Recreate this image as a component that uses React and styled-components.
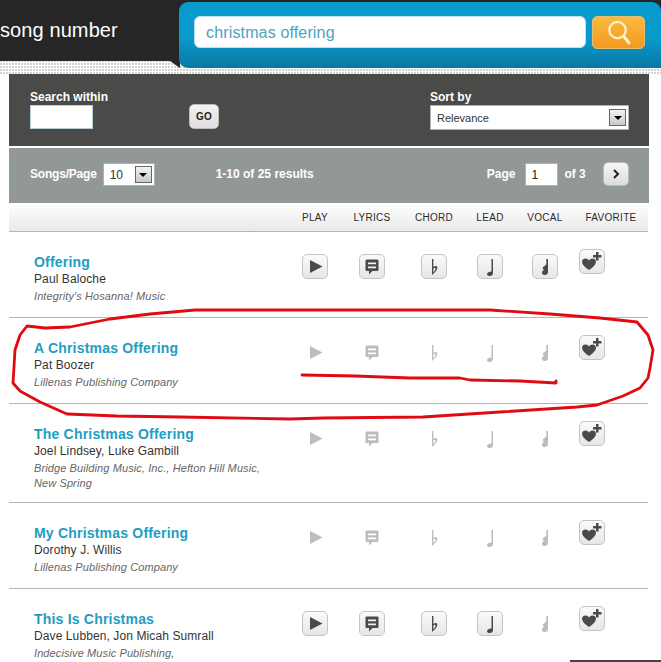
import React from 'react';
import styled, { createGlobalStyle } from 'styled-components';

const Global = createGlobalStyle`
  html, body { margin: 0; padding: 0; background: #fff; }
  body { font-family: "Liberation Sans", Arial, sans-serif; }
`;

const Page = styled.div`
  position: relative;
  width: 661px;
  height: 662px;
  overflow: hidden;
  background: #fff;
`;

const Masthead = styled.header`
  position: relative;
  display: flex;
  height: 74px;
  background:
    linear-gradient(#262626 61px, transparent 61px),
    radial-gradient(circle at 1px 1px, #cfd3d3 0.8px, transparent 1px) 0 0 / 3px 3px;
  &::after {
    content: "";
    position: absolute;
    left: 170px;
    top: 61px;
    width: 10px;
    height: 7px;
    background: #262626;
    clip-path: polygon(0 0, 100% 0, 100% 100%);
  }
`;

const Brand = styled.div`
  width: 179px;
  height: 61px;
  display: flex;
  align-items: center;
  padding-bottom: 1px;
  box-sizing: border-box;
  color: #fff;
  font-size: 20px;
  letter-spacing: 0.1px;
  white-space: nowrap;
`;

const SearchPanel = styled.div`
  position: relative;
  z-index: 1;
  flex: 1;
  height: 66px;
  margin-top: 2px;
  box-sizing: border-box;
  padding: 14px 16px 0 15px;
  display: flex;
  gap: 6px;
  align-items: flex-start;
  border-radius: 9px 9px 0 9px;
  background: linear-gradient(#079bcd, #0a9acb 55%, #0a78a3);
`;

const SearchField = styled.div`
  flex: 1;
  height: 32px;
  box-sizing: border-box;
  padding-left: 11px;
  border-radius: 6px;
  background: #fff;
  border: 1px solid #bfe0ee;
  color: #4aa3c0;
  font-size: 16px;
  letter-spacing: 0.15px;
  line-height: 32px;
`;

const SearchButton = styled.button`
  width: 53px;
  height: 33px;
  padding: 0;
  display: flex;
  align-items: center;
  justify-content: center;
  border: 1px solid #e4c170;
  border-radius: 5px;
  background: linear-gradient(#fbb93f, #f39a1e);
`;

const FilterPanel = styled.section`
  height: 72px;
  margin: 0 12px 0 9px;
  box-sizing: border-box;
  padding: 16px 20px 0 21px;
  display: flex;
  align-items: flex-start;
  background: #4a4a48;
`;

const FieldGroup = styled.div`
  display: flex;
  flex-direction: column;
  width: ${p => p.$width}px;
  margin-left: ${p => p.$left || 0}px;
`;

const FieldLabel = styled.label`
  color: #fff;
  font-size: 12px;
  font-weight: bold;
  line-height: 15px;
`;

const WithinInput = styled.div`
  width: 63px;
  height: 24px;
  box-sizing: border-box;
  background: #fff;
  border: 1px solid #b9cbd3;
`;

const GoButton = styled.button`
  width: 30px;
  height: 25px;
  margin: 14px 0 0 0;
  padding: 0;
  border: 1px solid #bbb;
  border-radius: 5px;
  background: linear-gradient(#f2f2f2, #dedede);
  color: #222;
  font: bold 10px "Liberation Sans", Arial, sans-serif;
  letter-spacing: 0.3px;
`;

const SelectBox = styled.div`
  width: ${p => p.$width}px;
  height: ${p => p.$height}px;
  box-sizing: border-box;
  display: flex;
  align-items: center;
  justify-content: space-between;
  padding: 0 2px 0 ${p => p.$pad}px;
  background: #fff;
  border: 1px solid #a9b4b8;
  color: #333;
  font-size: ${p => p.$size}px;
  font-weight: normal;
`;

const SelectArrow = styled.span`
  width: 17px;
  height: 17px;
  box-sizing: border-box;
  display: flex;
  align-items: center;
  justify-content: center;
  border: 1px solid #666;
  background: linear-gradient(#f4f4f4, #c8c8c8);
  &::before {
    content: "";
    border-left: 4px solid transparent;
    border-right: 4px solid transparent;
    border-top: 4px solid #000;
  }
`;

const PagerBar = styled.section`
  height: 55px;
  margin: 2px 12px 0 9px;
  box-sizing: border-box;
  padding: 15px 20px 0 21px;
  display: flex;
  align-items: flex-start;
  background: #929896;
  color: #fff;
  font-size: 12px;
  font-weight: bold;
`;

const PagerText = styled.span`
  line-height: 22px;
  margin-left: ${p => p.$left || 0}px;
  margin-right: ${p => p.$right || 0}px;
  letter-spacing: ${p => p.$tight ? '-0.2px' : '0'};
  white-space: nowrap;
`;

const PageInput = styled.div`
  width: 33px;
  height: 23px;
  box-sizing: border-box;
  margin-left: 10px;
  padding-left: 5px;
  background: #fff;
  border: 1px solid #a9b4b8;
  color: #222;
  font-size: 12px;
  font-weight: normal;
  line-height: 22px;
`;

const NextButton = styled.button`
  width: 26px;
  height: 24px;
  margin: -1px 0 0 auto;
  padding: 0;
  display: flex;
  align-items: center;
  justify-content: center;
  border: 1px solid #bbb;
  border-radius: 5px;
  background: linear-gradient(#f6f6f6, #dcdcdc);
`;

const ColumnBar = styled.div`
  height: 29px;
  margin: 0 13px 0 9px;
  box-sizing: border-box;
  padding-left: 278px;
  display: grid;
  grid-template-columns: 56px 58px 66px 46px 64px 68px;
  align-items: center;
  background: linear-gradient(#fff, #e9e9e9);
  border-bottom: 1px solid #b5b5b5;
`;

const ColumnLabel = styled.span`
  text-align: center;
  font-size: 10px;
  letter-spacing: 0.3px;
  color: #2a2a2a;
  white-space: nowrap;
`;

const SongRow = styled.article`
  margin: 0 13px 0 9px;
  display: grid;
  grid-template-columns: 293px 57px 62px 56px 55px 47px 26px;
  align-items: start;
  min-height: 85px;
  border-bottom: 1px solid #b5b5b5;
`;

const SongInfo = styled.div`
  padding: 21px 40px 11px 25px;
`;

const SongTitle = styled.a`
  display: block;
  color: #239cc2;
  font-size: 14px;
  font-weight: bold;
  line-height: 19px;
  letter-spacing: 0.2px;
`;

const Artist = styled.div`
  color: #333;
  font-size: 12px;
  letter-spacing: 0.1px;
  line-height: 15px;
`;

const Publisher = styled.div`
  margin-top: 2px;
  color: #666;
  font-size: 11px;
  font-style: italic;
  letter-spacing: 0.1px;
  line-height: 15px;
`;

const IconCell = styled.div`
  width: 26px;
  height: 25px;
  margin-top: ${p => p.$fav ? 17 : 22}px;
  box-sizing: border-box;
  color: ${p => p.$off ? '#bdbdbd' : '#4a4a4a'};
  ${p => p.$off ? '' : `
    border: 1px solid #c4c4c4;
    border-radius: 5px;
    background: linear-gradient(#fafafa, #e6e6e6);
  `}
  & svg { display: block; margin: ${p => p.$off ? 0 : -1}px; }
`;

const Scribble = styled.svg`
  position: absolute;
  left: 0;
  top: 0;
  pointer-events: none;
`;

const CropEdge = styled.div`
  position: absolute;
  right: 0;
  bottom: 0;
  width: 91px;
  height: 2px;
  background: #444;
`;

const Glyph = ({ children }) => (
  <svg width="26" height="25" viewBox="0 0 26 25" fill="currentColor">{children}</svg>
);

const Play = () => <Glyph><path d="M8 6 L20.5 12.5 L8 19 Z" /></Glyph>;
const Lyrics = () => (
  <Glyph>
    <path fillRule="evenodd" d="M7.5 5.5 H18.5 Q19.5 5.5 19.5 6.5 V16 Q19.5 17 18.5 17 H13.5 L10 20.5 V17 H7.5 Q6.5 17 6.5 16 V6.5 Q6.5 5.5 7.5 5.5 Z M9 8.5 V10.2 H17 V8.5 Z M9 12.5 V14.2 H17 V12.5 Z" />
  </Glyph>
);
const Flat = () => (
  <Glyph>
    <path fillRule="evenodd" d="M11 5 H12.4 V13 Q14 11.5 15.5 12 Q17 13 16 15.5 Q14.5 18.5 11 21 Z M12.4 14.5 V18.5 Q14.8 16 14.6 14.3 Q13.8 13.2 12.4 14.5 Z" />
  </Glyph>
);
const Lead = () => (
  <Glyph>
    <path d="M14.5 5 H16 V19 Q16 21.5 13 22 Q10 22 10 20 Q10.5 17.5 14.5 17.5 Z" />
  </Glyph>
);
const Vocal = () => (
  <Glyph>
    <path d="M14.3 5 H16 V18 Q16 21 12.5 21 Q9.5 20.5 10 18 Q10.5 16.5 12 16 Q10 14.5 11 13 Q12.5 12 14.3 10.5 Z" />
  </Glyph>
);
const Favorite = () => (
  <Glyph>
    <path d="M10 21 Q3 16.5 3 12.5 Q3.5 9.5 6.5 9.5 Q9 9.5 10 11.5 Q11 9.5 13.5 9.5 Q16.5 9.5 17 12.5 Q17 16.5 10 21 Z" />
    <path d="M17 3 H19.5 V6 H22.5 V8.5 H19.5 V11.5 H17 V8.5 H14 V6 H17 Z" />
  </Glyph>
);

const icons = [Play, Lyrics, Flat, Lead, Vocal];
const columns = ['PLAY', 'LYRICS', 'CHORD', 'LEAD', 'VOCAL', 'FAVORITE'];

const songs = [
  { title: 'Offering', artist: 'Paul Baloche', publisher: "Integrity's Hosanna! Music", off: [] },
  { title: 'A Christmas Offering', artist: 'Pat Boozer', publisher: 'Lillenas Publishing Company', off: [0, 1, 2, 3, 4] },
  { title: 'The Christmas Offering', artist: 'Joel Lindsey, Luke Gambill', publisher: 'Bridge Building Music, Inc., Hefton Hill Music, New Spring', off: [0, 1, 2, 3, 4] },
  { title: 'My Christmas Offering', artist: 'Dorothy J. Willis', publisher: 'Lillenas Publishing Company', off: [0, 1, 2, 3, 4] },
  { title: 'This Is Christmas', artist: 'Dave Lubben, Jon Micah Sumrall', publisher: 'Indecisive Music Publishing,', off: [4] },
];

export default function App() {
  return (
    <Page>
      <Global />
      <Masthead>
        <Brand>song number</Brand>
        <SearchPanel>
          <SearchField>christmas offering</SearchField>
          <SearchButton aria-label="Search">
            <svg width="30" height="29" viewBox="0 0 30 29" fill="none">
              <circle cx="13.5" cy="12" r="8.2" stroke="#fdf1cf" strokeWidth="2.2" />
              <path d="M19.5 18 L25 25" stroke="#fdf1cf" strokeWidth="3" strokeLinecap="round" />
            </svg>
          </SearchButton>
        </SearchPanel>
      </Masthead>

      <FilterPanel>
        <FieldGroup $width={159}>
          <FieldLabel>Search within</FieldLabel>
          <WithinInput />
        </FieldGroup>
        <GoButton>GO</GoButton>
        <FieldGroup $width={199} $left={211}>
          <FieldLabel>Sort by</FieldLabel>
          <SelectBox $width={199} $height={25} $pad={6} $size={11}>
            Relevance
            <SelectArrow />
          </SelectBox>
        </FieldGroup>
      </FilterPanel>

      <PagerBar>
        <PagerText $right={6} $tight>Songs/Page</PagerText>
        <SelectBox $width={52} $height={23} $pad={6} $size={12}>
          10
          <SelectArrow />
        </SelectBox>
        <PagerText $left={61}>1-10 of 25 results</PagerText>
        <PagerText $left={173}>Page</PagerText>
        <PageInput>1</PageInput>
        <PagerText $left={6}>of 3</PagerText>
        <NextButton aria-label="Next page">
          <svg width="10" height="12" viewBox="0 0 10 12" fill="none">
            <path d="M3 2 L7 6 L3 10" stroke="#222" strokeWidth="2" />
          </svg>
        </NextButton>
      </PagerBar>

      <ColumnBar>
        {columns.map(c => <ColumnLabel key={c}>{c}</ColumnLabel>)}
      </ColumnBar>

      {songs.map(song => (
        <SongRow key={song.title}>
          <SongInfo>
            <SongTitle>{song.title}</SongTitle>
            <Artist>{song.artist}</Artist>
            <Publisher>{song.publisher}</Publisher>
          </SongInfo>
          {icons.map((Icon, i) => (
            <IconCell key={i} $off={song.off.includes(i)}><Icon /></IconCell>
          ))}
          <IconCell $fav><Favorite /></IconCell>
        </SongRow>
      ))}

      <CropEdge />
      <Scribble width="661" height="662" viewBox="0 0 661 662" fill="none" stroke="#e00b12" strokeWidth="2.8" strokeLinejoin="round" strokeLinecap="round">
        <path d="M27 326 L45 328 L70 327 L90 323 L110 319 L150 314 L195 310 L300 310 L400 310 L490 310 L550 314 L600 318 L637 322 L648 335 L653 350 L650 368 L648 378 L640 388 L623 396 L597 405 L577 407 L500 412 L423 417 L323 418 L290 419 L180 417 L117 416 L67 414 L40 402 L20 391 L13 383 L15 350 L20 335 Z" />
        <path d="M302 375 L355 376 L410 378 L460 378 L470 380 L520 381 L556 383 L556 381" />
      </Scribble>
    </Page>
  );
}
